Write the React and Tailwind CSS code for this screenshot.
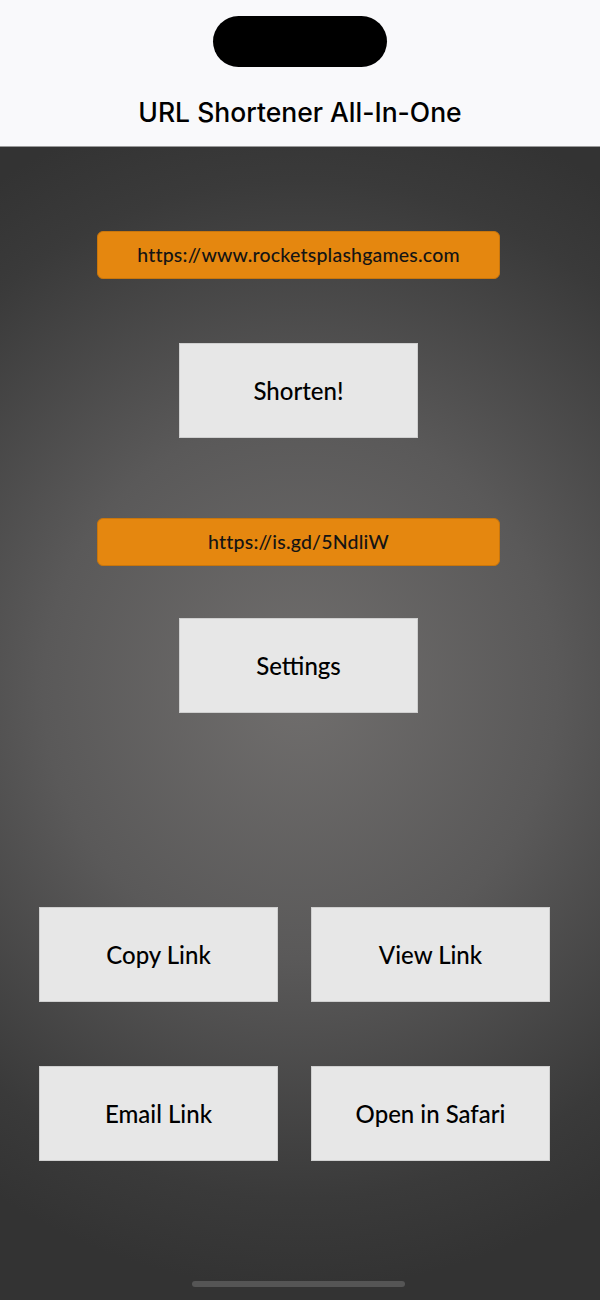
import React from "react";

function Field({ children }) {
  return (
    <div className="w-[403px] h-[48px] rounded-[6px] bg-[#e5870f] border border-[#c9760c] flex items-center justify-center text-[19.5px] tracking-[0.2px] text-[#141414] font-medium font-[Lato,sans-serif]">
      {children}
    </div>
  );
}

function Btn({ children }) {
  return (
    <div className="w-[239px] h-[95px] bg-[#e7e7e7] border border-[#cfcfcf] flex items-center justify-center text-[24px] text-black font-medium font-[Lato,sans-serif]">
      {children}
    </div>
  );
}

export default function App() {
  return (
    <div className="w-[600px] h-[1300px] flex flex-col overflow-hidden">
      <div className="h-[147px] bg-[#f9f9fb] flex flex-col items-center border-b border-[#9a9a9a]">
        <div className="mt-[16px] w-[174px] h-[51px] rounded-full bg-black" />
        <div className="mt-[30px] text-[26.5px] font-medium text-black font-[Inter,sans-serif] leading-[30px]">
          URL Shortener All-In-One
        </div>
      </div>
      <div className="flex-1 flex flex-col items-center pr-[3px] bg-[radial-gradient(ellipse_95%_52%_at_50%_47%,#706e6d_0%,#5a5959_45%,#3a3a3a_85%,#333333_100%)]">
        <div className="mt-[84px]">
          <Field>https://www.rocketsplashgames.com</Field>
        </div>
        <div className="mt-[64px]">
          <Btn>Shorten!</Btn>
        </div>
        <div className="mt-[80px]">
          <Field>https://is.gd/5NdliW</Field>
        </div>
        <div className="mt-[52px]">
          <Btn>Settings</Btn>
        </div>
        <div className="mt-[194px] grid grid-cols-[239px_239px] gap-x-[33px] gap-y-[64px] self-start ml-[39px]">
          <Btn>Copy Link</Btn>
          <Btn>View Link</Btn>
          <Btn>Email Link</Btn>
          <Btn>Open in Safari</Btn>
        </div>
        <div className="mt-auto mb-[13px] w-[213px] h-[6px] rounded-full bg-[#555555]" />
      </div>
    </div>
  );
}
